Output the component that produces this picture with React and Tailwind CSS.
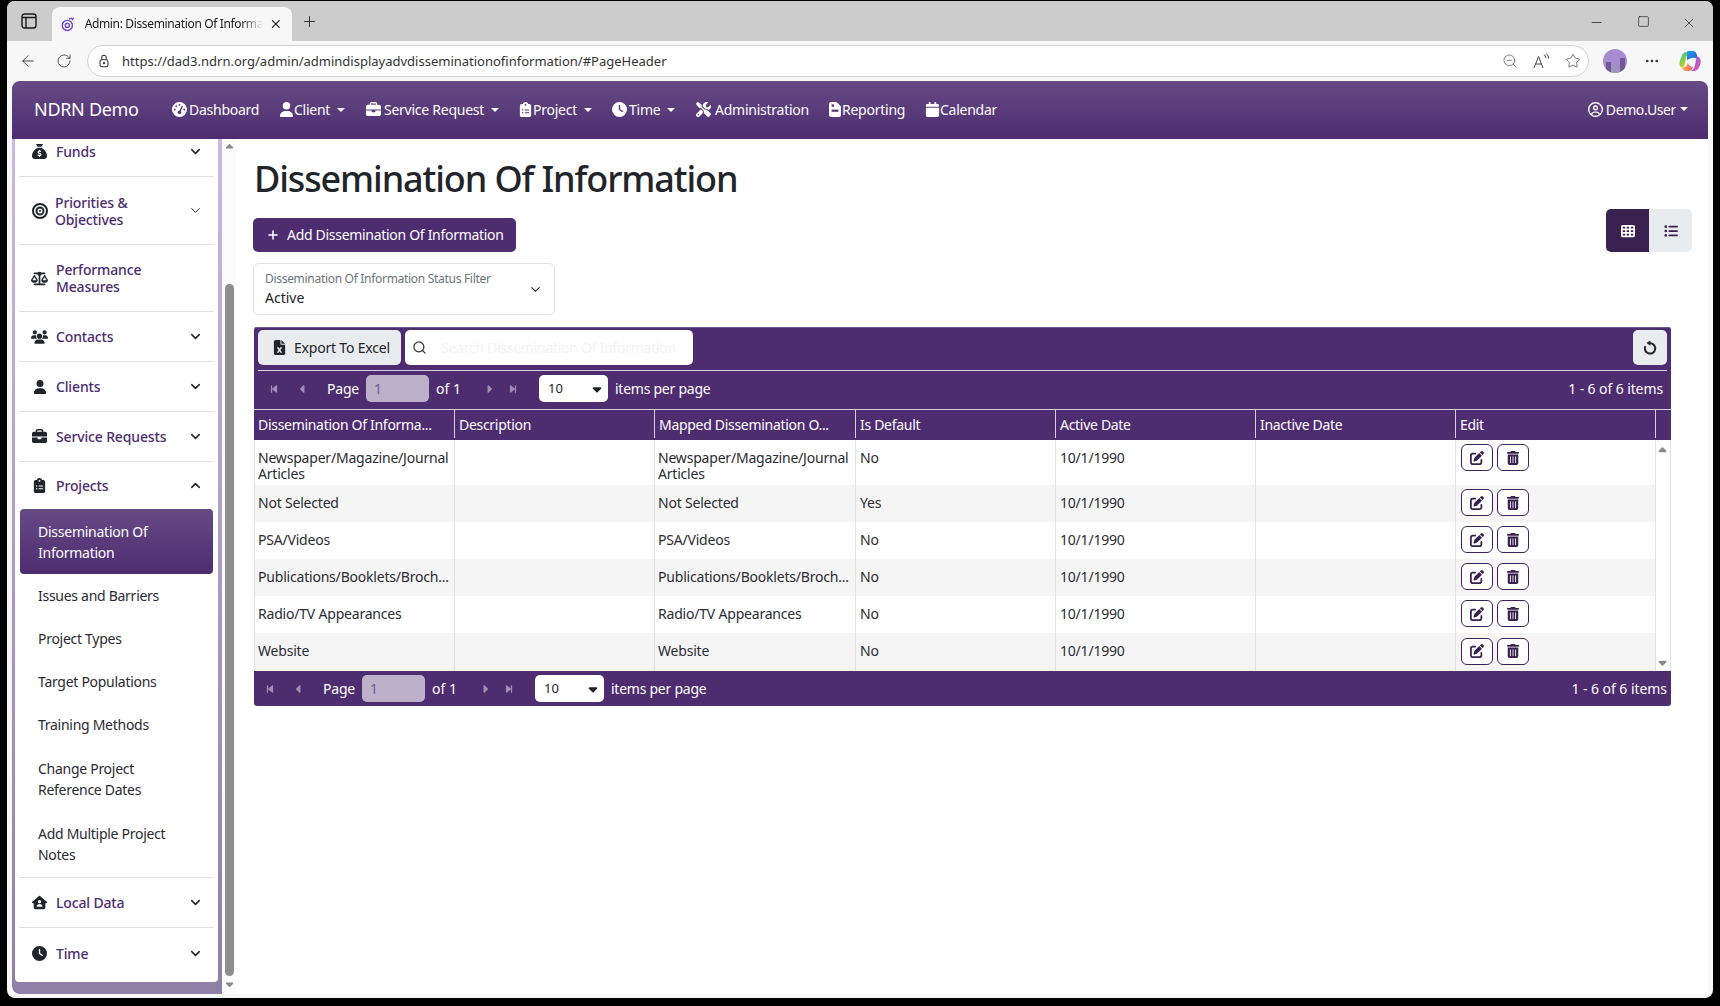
import React from "react";
import { ChevronDown, ChevronUp, Search, Plus, X, ArrowLeft, RotateCw, ZoomOut, Star, MoreHorizontal, Minus, Square } from "lucide-react";
import {
  FaSackDollar, FaBullseye, FaScaleBalanced, FaUsers, FaUser, FaBriefcase, FaClipboardList, FaHouseUser, FaClock,
  FaGaugeHigh, FaScrewdriverWrench, FaCalendar, FaRegCircleUser, FaFileExcel, FaPenToSquare,
  FaTrashCan, FaTableCells, FaListUl, FaBackwardStep, FaForwardStep, FaCaretLeft, FaCaretRight, FaCaretDown, FaCaretUp,
} from "react-icons/fa6";

function ReportIcon({ size = 15 }) {
  return (
    <svg width={size} height={size} viewBox="0 0 12 15">
      <path d="M2 0h5.5L12 4.5V13a2 2 0 01-2 2H2a2 2 0 01-2-2V2a2 2 0 012-2z" fill="#fff" />
      <rect x="2.6" y="2.4" width="2.4" height="2.4" fill="#58397a" />
      <rect x="2.6" y="7.6" width="6.8" height="2.2" fill="#58397a" />
    </svg>
  );
}

function RefreshIcon() {
  return (
    <svg width="16" height="16" viewBox="0 0 16 16" fill="none" stroke="#212529" strokeWidth="2">
      <path d="M8 3.2a5.2 5.2 0 11-4.7 3" />
      <path d="M8.4 0.4v5.4L4.4 3.1z" fill="#212529" stroke="none" />
    </svg>
  );
}

const navItems = [
  { w: "w-[107px]", box: "w-[17px]", icon: FaGaugeHigh, label: "Dashboard" },
  { w: "w-[87px]", box: "w-[15px]", icon: FaUser, label: "Client", caret: true },
  { w: "w-[152px]", box: "w-[18px]", icon: FaBriefcase, label: "Service Request", caret: true },
  { w: "w-[94px]", box: "w-[15px]", icon: FaClipboardList, label: "Project", caret: true },
  { w: "w-[84px]", box: "w-[17px]", icon: FaClock, label: "Time", caret: true },
  { w: "w-[132px]", box: "w-[19px]", icon: FaScrewdriverWrench, label: "Administration" },
  { w: "w-[97px]", box: "w-[14px]", icon: ReportIcon, label: "Reporting" },
  { w: "w-[90px]", box: "w-[15px]", icon: FaCalendar, label: "Calendar" },
];

const subItems = [
  { label: ["Issues and Barriers"] },
  { label: ["Project Types"] },
  { label: ["Target Populations"] },
  { label: ["Training Methods"] },
  { label: ["Change Project", "Reference Dates"] },
  { label: ["Add Multiple Project", "Notes"] },
];

const columns = ["Dissemination Of Informa...", "Description", "Mapped Dissemination O...", "Is Default", "Active Date", "Inactive Date", "Edit"];

const rows = [
  { h: "h-[45px]", a: ["Newspaper/Magazine/Journal", "Articles"], d: "No", tall: true },
  { h: "h-[37px]", a: ["Not Selected"], d: "Yes", alt: true },
  { h: "h-[37px]", a: ["PSA/Videos"], d: "No" },
  { h: "h-[37px]", a: ["Publications/Booklets/Broch..."], d: "No", alt: true },
  { h: "h-[37px]", a: ["Radio/TV Appearances"], d: "No" },
  { h: "h-[38px]", a: ["Website"], d: "No", alt: true },
];

function Caret() {
  return <span className="ml-[7px] inline-block w-0 h-0 border-l-[4px] border-r-[4px] border-t-[4px] border-l-transparent border-r-transparent border-t-white" />;
}

function SideRow({ icon: Icon, h, lines, chevron = "down", size = 15, gap = "ml-[8px]", thin, pad = "" }) {
  return (
    <div className={`${h} ${pad} border-b border-[#e0dfe8] flex items-center pl-[12px] pr-[11px] shrink-0`}>
      <span className="w-[17px] flex justify-center text-[#212529] shrink-0"><Icon size={size} /></span>
      <div className={`${gap} flex-1 text-[14px] font-medium leading-[17px] tracking-[-0.15px] text-[#4d2c70]`}>
        {lines.map((l) => <div key={l}>{l}</div>)}
      </div>
      {chevron === "down" && <ChevronDown size={15} strokeWidth={thin ? 1.6 : 2.4} className="text-[#212529]" />}
      {chevron === "up" && <ChevronUp size={15} strokeWidth={2.4} className="text-[#212529]" />}
    </div>
  );
}

function Pager() {
  return (
    <div className="flex items-center text-[14px] text-white">
      <span className="w-[28px] flex text-[#9f8fb3]"><FaBackwardStep size={10} /></span>
      <span className="w-[30px] flex text-[#9f8fb3]"><FaCaretLeft size={12} /></span>
      <span className="w-[39px] tracking-[-0.2px]">Page</span>
      <span className="w-[63px] h-[27px] rounded-[5px] bg-[#bdb0cb] flex items-center pl-[8px] text-[#6f5c86] text-[14px]">1</span>
      <span className="ml-[7px] w-[47px]">of 1</span>
      <span className="w-[25px] flex text-[#9f8fb3]"><FaCaretRight size={12} /></span>
      <span className="w-[31px] flex text-[#9f8fb3]"><FaForwardStep size={10} /></span>
      <span className="w-[69px] h-[27px] rounded-[5px] bg-white flex items-center justify-between pl-[9px] pr-[4px] text-[#212529] text-[13px]">10<FaCaretDown size={14} /></span>
      <span className="ml-[7px] tracking-[-0.25px]">items per page</span>
    </div>
  );
}

function Copilot() {
  return (
    <svg width="24" height="24" viewBox="0 0 24 24">
      <defs>
        <linearGradient id="cpa" x1="0" y1="0" x2="1" y2="1"><stop offset="0" stopColor="#19a5e8" /><stop offset="1" stopColor="#2f55d8" /></linearGradient>
        <linearGradient id="cpb" x1="0" y1="0" x2="0.6" y2="1"><stop offset="0" stopColor="#2fc0b0" /><stop offset="0.6" stopColor="#8ad13a" /><stop offset="1" stopColor="#f7c51c" /></linearGradient>
        <linearGradient id="cpc" x1="0" y1="0" x2="1" y2="1"><stop offset="0" stopColor="#7d5fe8" /><stop offset="1" stopColor="#e85ca8" /></linearGradient>
        <linearGradient id="cpd" x1="0" y1="0" x2="1" y2="0"><stop offset="0" stopColor="#f5b52a" /><stop offset="1" stopColor="#f0608a" /></linearGradient>
      </defs>
      <path d="M3.5 7.5C4.2 4.5 6 3 8.5 3H12C9.5 4 8.6 6.5 8 9L6.6 15.5C6.2 17.5 5.3 18.5 4 18.5 2 18 1 15.5 1.6 13Z" fill="url(#cpb)" />
      <path d="M9 2.5C10 2 11 2 12.5 2H15C17 2 18.2 3.4 18.8 5.5L20 10.5C17.5 8.5 14.5 8.2 12 9.4L9 11Z" fill="url(#cpa)" />
      <path d="M18.6 7.6C20.4 7.6 22.4 9 22.7 11.4 23 14 22 17 20.4 19.4 19.2 21 17.6 22 15.6 22H12.8C15.5 21 16.4 18.4 17 16L18.2 10.6Z" fill="url(#cpc)" />
      <path d="M4 18.5C6 19 7.5 18 8.5 16.5L10.8 13C11 16 12.5 18 15 17.8 14.5 20 13.5 22 11 22H8C5.5 22 4.5 20.5 4 18.5Z" fill="url(#cpd)" />
      <path d="M9.2 11.4 14.8 9.6 13.6 15.6 11 16.6Z" fill="#fff" opacity="0.9" />
    </svg>
  );
}

export default function App() {
  return (
    <div className="w-[1720px] h-[1006px] bg-black overflow-hidden pt-px pl-[7px] font-['Noto_Sans',sans-serif]">
      <div className="w-[1706px] h-[997px] bg-[#f7f7f7] rounded-[8px] overflow-hidden flex flex-col">
        {/* tab strip */}
        <div className="h-[40px] bg-[#cccccc] flex shrink-0 pt-[6px] text-[#1a1a1a]">
          <div className="w-[42px] pl-[1px] flex justify-center items-center pb-[6px]">
            <svg width="16" height="16" viewBox="0 0 16 16" fill="none" stroke="#1a1a1a" strokeWidth="1.4"><rect x="1" y="1" width="14" height="14" rx="2.5" /><path d="M1 4.5h14M5 4.5v10.5" /></svg>
          </div>
          <div className="ml-[3px] w-[240px] h-[34px] bg-[#f7f7f7] rounded-t-[8px] flex items-center pl-[8px] pr-[9px]">
            <svg width="15" height="15" viewBox="0 0 16 16" fill="none" stroke="#6a3fd1" strokeWidth="1.5"><circle cx="8" cy="9" r="5.5" /><circle cx="8" cy="9" r="2.2" /><path d="M13 3l2-2M10 2l3-1" /></svg>
            <span className="ml-[10px] w-[183px] overflow-hidden whitespace-nowrap text-[12px] tracking-[-0.35px] [mask-image:linear-gradient(to_right,black_88%,transparent)]">Admin: Dissemination Of Information</span>
            <X size={14} className="ml-[6px]" />
          </div>
          <div className="w-[34px] flex justify-center items-center pb-[6px]"><Plus size={17} strokeWidth={1.2} /></div>
          <div className="flex-1 flex justify-end items-start pt-[8px] pr-[16px] gap-[32px]">
            <Minus size={15} strokeWidth={1.2} />
            <Square size={13} strokeWidth={1.2} className="translate-x-px" />
            <X size={16} strokeWidth={1} />
          </div>
        </div>
        {/* toolbar */}
        <div className="h-[40px] shrink-0 flex items-center text-[#333] pl-[12px]">
          <ArrowLeft size={18} strokeWidth={1.2} />
          <RotateCw size={16} strokeWidth={1.2} className="ml-[19px]" />
          <div className="ml-[15px] w-[1502px] h-[32px] bg-white border border-[#d2d2d2] rounded-full flex items-center pl-[9px] pr-[7px]">
            <svg width="14" height="14" viewBox="0 0 16 16" fill="none" stroke="#333" strokeWidth="1.2"><rect x="3.5" y="6.5" width="9" height="8" rx="2" /><path d="M5.5 6.5V4a2.5 2.5 0 015 0v2.5" /><circle cx="8" cy="10.5" r=".7" fill="#333" /></svg>
            <span className="ml-[11px] pt-px text-[13px] text-[#333] flex-1">https://dad3.ndrn.org/admin/admindisplayadvdisseminationofinformation/#PageHeader</span>
            <ZoomOut size={16} strokeWidth={1} className="text-[#444]" />
            <span className="ml-[15px] w-[17px] flex items-start text-[#444]">
              <svg width="17" height="16" viewBox="0 0 17 16" fill="none" stroke="#444" strokeWidth="1"><path d="M1 15 5.5 3.5 10 15M2.6 11h5.8M11 1.5c1 1 1.6 2.2 1.8 3.5M13.5 0.5c1.2 1.3 2 3 2.2 5" /></svg>
            </span>
            <Star size={16} strokeWidth={1} className="ml-[15px]" />
          </div>
          <div className="ml-[14px] w-[24px] h-[24px] rounded-full bg-[#a88bd0] flex justify-center items-end gap-px overflow-hidden">
            <div className="w-[5px] h-[11px] bg-[#6f5b94]" />
            <div className="w-[7px] h-[9px] bg-[#a092c0]" />
            <div className="w-[5px] h-[15px] bg-[#6f5b94]" />
          </div>
          <MoreHorizontal size={16} strokeWidth={2} className="ml-[17px]" />
          <div className="ml-[18px]"><Copilot /></div>
        </div>
        {/* app frame */}
        <div className="flex-1 pl-[5px] pr-[5px] pb-[4px] flex flex-col min-h-0">
          <div className="h-[58px] pb-[1px] shrink-0 rounded-t-[8px] bg-gradient-to-b from-[#664a85] to-[#4d2c70] flex items-center text-white text-[14px] pl-[22px] pr-[20px]">
            <span className="w-[138px] text-[18px] tracking-[-0.3px]">NDRN Demo</span>
            {navItems.map(({ w, box, icon: Icon, label, caret }) => (
              <div key={label} className={`${w} flex items-center tracking-[-0.25px] whitespace-nowrap`}>
                <span className={`${box} flex shrink-0`}><Icon size={15} /></span>{label}{caret && <Caret />}
              </div>
            ))}
            <div className="ml-auto flex items-center tracking-[-0.4px]">
              <span className="w-[18px] flex shrink-0"><FaRegCircleUser size={15} /></span>Demo.User<span className="-ml-[3px] -mt-[2px] flex"><Caret /></span>
            </div>
          </div>
          <div className="flex-1 flex min-h-0 bg-white">
            {/* sidebar */}
            <div className="w-[210px] shrink-0 bg-gradient-to-b from-[#c9b9e4] to-[#8f7fa6] pl-[3px] pr-[4px] pb-[12px] rounded-bl-[8px]">
              <div className="h-full bg-white rounded-b-[4px] overflow-hidden px-[4px] flex flex-col">
                <SideRow icon={FaSackDollar} h="h-[38px]" pad="pb-[12px]" lines={["Funds"]} />
                <SideRow icon={FaBullseye} h="h-[68px]" lines={["Priorities &", "Objectives"]} size={16} gap="ml-[7px]" thin />
                <SideRow icon={FaScaleBalanced} h="h-[67px]" lines={["Performance", "Measures"]} chevron={null} size={17} />
                <SideRow icon={FaUsers} h="h-[50px]" lines={["Contacts"]} size={18} />
                <SideRow icon={FaUser} h="h-[50px]" lines={["Clients"]} size={14} />
                <SideRow icon={FaBriefcase} h="h-[50px]" lines={["Service Requests"]} />
                <div className="h-[47px] shrink-0 flex items-center pl-[12px] pr-[11px]">
                  <span className="w-[17px] flex justify-center text-[#212529] shrink-0"><FaClipboardList size={15} /></span>
                  <span className="ml-[8px] flex-1 text-[14px] font-medium tracking-[-0.15px] text-[#4d2c70]">Projects</span>
                  <ChevronUp size={15} strokeWidth={2.4} className="text-[#212529]" />
                </div>
                <div className="shrink-0 h-[65px] mx-px rounded-[4px] bg-gradient-to-b from-[#664a85] to-[#4d2c70] text-white text-[14px] leading-[21px] pl-[18px] flex flex-col justify-center tracking-[-0.25px]">
                  <div>Dissemination Of</div><div>Information</div>
                </div>
                {subItems.map(({ label }) => (
                  <div key={label[0]} className={`${label.length > 1 ? "h-[65px]" : "h-[43px]"} shrink-0 pl-[19px] text-[14px] leading-[21px] text-[#2b2b33] flex flex-col justify-center tracking-[-0.28px]`}>
                    {label.map((l) => <div key={l}>{l}</div>)}
                  </div>
                ))}
                <div className="h-[2px] shrink-0 border-b border-[#e0dfe8]" />
                <SideRow icon={FaHouseUser} h="h-[50px]" lines={["Local Data"]} />
                <SideRow icon={FaClock} h="h-[50px] !border-b-0" lines={["Time"]} />
              </div>
            </div>
            {/* sidebar scroll */}
            <div className="w-[14px] shrink-0 bg-[#fbfbfb] flex flex-col items-center text-[#8a8a8a]">
              <FaCaretUp size={13} className="mt-[2px] text-[#8a8a8a] h-[12px]" />
              <div className="w-[9px] mt-[131px] h-[692px] rounded-full bg-[#8d8d8d]" />
              <FaCaretDown size={13} className="mt-[2px] h-[12px]" />
            </div>
            {/* main */}
            <div className="flex-1 min-w-0 pl-[17px] pr-[37px] pt-[16px]">
              <h1 className="pl-px text-[36px] leading-[47px] font-medium text-[#212529] tracking-[-1.12px]">Dissemination Of Information</h1>
              <div className="flex justify-between items-start">
                <div className="pt-[16px]">
                  <button className="h-[34px] w-[263px] pb-px rounded-[5px] bg-[#4d2c70] text-white text-[14px] flex items-center pl-[13px] tracking-[-0.3px]">
                    <Plus size={14} strokeWidth={2.6} /><span className="ml-[7px]">Add Dissemination Of Information</span>
                  </button>
                </div>
                <div className="flex mr-[-22px] mt-[7px] h-[43px] w-[86px] rounded-[5px] overflow-hidden">
                  <div className="w-[43px] bg-[#38204f] flex items-center justify-center text-white"><FaTableCells size={14} /></div>
                  <div className="w-[43px] bg-[#e9ecef] flex items-center justify-center text-[#38204f]"><FaListUl size={14} /></div>
                </div>
              </div>
              <div className="mt-[11px] w-[302px] h-[52px] pb-[2px] border border-[#dee2e6] rounded-[6px] flex items-center justify-between pl-[11px] pr-[11px]">
                <div>
                  <div className="text-[12px] leading-[18px] text-[#6c757d] tracking-[-0.3px]">Dissemination Of Information Status Filter</div>
                  <div className="text-[14px] leading-[19px] text-[#212529]">Active</div>
                </div>
                <ChevronDown size={15} strokeWidth={1.8} className="mt-[2px] text-[#212529]" />
              </div>
              {/* grid */}
              <div className="mt-[12px] ml-px w-[1417px] rounded-[3px] overflow-hidden bg-white">
                <div className="bg-[#4d2c70] border-t border-[#6f5590] h-[43px] px-[4px] pt-[2px] shrink-0">
                  <div className="flex h-[35px]">
                    <button className="w-[143px] rounded-[5px] bg-[#e9ecef] text-[14px] text-[#212529] flex items-center pl-[14px] tracking-[-0.2px]">
                      <FaFileExcel size={15} className="text-[#212529]" /><span className="ml-[7px]">Export To Excel</span>
                    </button>
                    <div className="ml-[4px] w-[288px] rounded-[5px] bg-white flex items-center pl-[7px]">
                      <Search size={15} strokeWidth={2} className="text-[#333]" />
                      <span className="ml-[14px] text-[14px] text-[#f3f3f5] tracking-[-0.27px]">Search Dissemination Of Information</span>
                    </div>
                    <button className="ml-auto w-[34px] rounded-[5px] bg-[#e9ecef] flex items-center justify-center"><RefreshIcon /></button>
                  </div>
                </div>
                <div className="bg-[#4d2c70] h-[39px] relative flex items-center justify-between pl-[15px] pr-[8px] pb-[2px] text-white">
                  <div className="absolute left-[4px] right-[4px] top-0 h-px bg-[#d7cfe0]" />
                  <Pager />
                  <span className="text-[14px] tracking-[-0.1px]">1 - 6 of 6 items</span>
                </div>
                <div className="grid grid-cols-[201px_200px_201px_200px_200px_200px_200px_1fr] h-[31px] pb-[2px] bg-[#4d2c70] border-t border-[#d7cfe0] text-white text-[14px]">
                  {columns.map((c) => (
                    <div key={c} className="border-r border-[#d7cfe0] pl-[4px] flex items-center whitespace-nowrap tracking-[-0.3px]">{c}</div>
                  ))}
                  <div />
                </div>
                <div className="border-l border-r border-[#e3e3e3] relative">
                  {rows.map((r) => (
                    <div key={r.a[0]} className={`grid grid-cols-[200px_200px_201px_200px_200px_200px_200px] ${r.h} text-[14px] text-[#2b2b33]`}>
                      {[r.a, [""], r.a, [r.d], ["10/1/1990"], [""], null].map((cell, i) => (
                        <div key={i} className={`border-r border-[#e3e3e3] ${r.alt ? "bg-[#f5f5f5]" : "bg-white"} ${i === 0 || i === 2 ? "pl-[3px]" : "pl-[4px]"} flex ${r.tall ? "items-start pt-[10px]" : "items-center pb-[2px]"} leading-[16px] tracking-[-0.2px]`}>
                          {cell ? (
                            <div>{cell.map((l, j) => <div key={j} className="whitespace-nowrap">{l}</div>)}</div>
                          ) : (
                            <div className={`flex gap-[4px] pl-[1px] ${r.tall ? "-mt-[6px]" : ""}`}>
                              <button className="w-[32px] h-[27px] rounded-[6px] border border-[#3b2358] bg-white flex items-center justify-center text-[#38204f]"><FaPenToSquare size={14} /></button>
                              <button className="w-[32px] h-[27px] rounded-[6px] border border-[#3b2358] bg-white flex items-center justify-center text-[#38204f]"><FaTrashCan size={14} /></button>
                            </div>
                          )}
                        </div>
                      ))}
                    </div>
                  ))}
                  <FaCaretUp size={13} className="absolute right-[1px] top-[4px] text-[#8a8a8a]" />
                  <FaCaretDown size={13} className="absolute right-[1px] bottom-[2px] text-[#8a8a8a]" />
                </div>
                <div className="bg-[#4d2c70] h-[35px] flex items-center justify-between pl-[11px] pr-[4px] text-white">
                  <Pager />
                  <span className="text-[14px] tracking-[-0.05px]">1 - 6 of 6 items</span>
                </div>
              </div>
            </div>
            <div className="w-px" />
          </div>
        </div>
      </div>
    </div>
  );
}
